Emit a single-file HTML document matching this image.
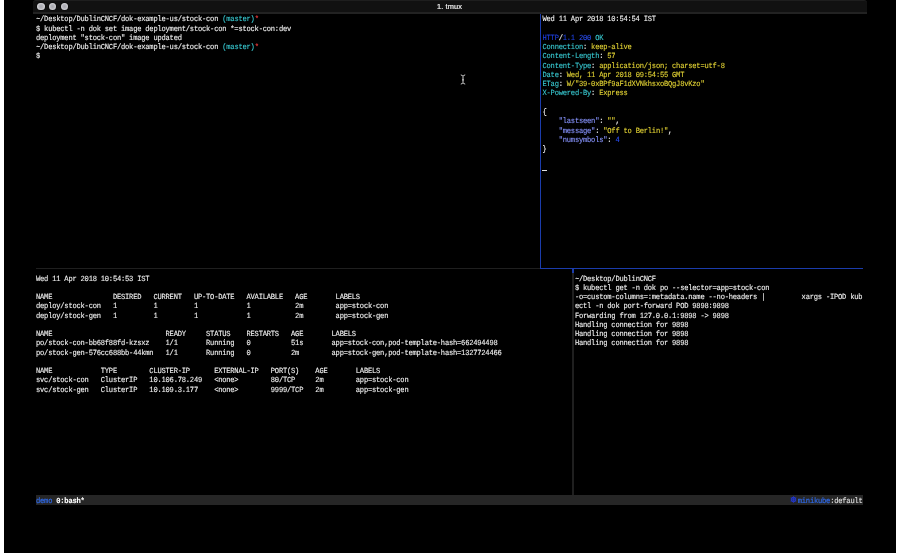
<!DOCTYPE html>
<html><head><meta charset="utf-8">
<style>
html,body{margin:0;padding:0;width:900px;height:555px;overflow:hidden;background:#fff}
#scr{position:absolute;left:4px;top:0;width:892px;height:553px;background:#000}
#tb{position:absolute;left:33px;top:0;width:834px;height:11px;background:#111;border-top:1px solid #1e1e1e;border-bottom:2px solid #222;box-sizing:content-box;border-radius:3px 3px 0 0;will-change:transform}
.dot{position:absolute;top:1.7px;width:7.4px;height:7.4px;border-radius:50%;background:radial-gradient(circle,#a9a9b0 0,#b4b4ba 35%,#d6d6da 72%,#c6c6ca 100%);box-shadow:0 0 0 0.6px #080808}
#title{position:absolute;left:0;width:833px;top:0.5px;text-align:center;font-family:"Liberation Sans",sans-serif;font-size:7.4px;color:#f0f0f0;line-height:9px;-webkit-text-stroke:0.2px #f0f0f0;letter-spacing:0.1px}
.t{position:absolute;font-family:"Liberation Mono",monospace;font-size:7.1000px;letter-spacing:-0.2086px;line-height:9.256px;white-space:pre;color:#f2f2f2;text-rendering:geometricPrecision;-webkit-text-stroke:0.1px currentColor;transform:scaleY(1.1);transform-origin:0 6.5px}
.ln{position:absolute}
#g{position:absolute;left:0;top:0;width:900px;height:555px;will-change:transform}
.cy{color:#38cad2}
.rd{color:#f03c3c}
.bl{color:#1f40e0}
.bl2{color:#2a4ef4}
.ye{color:#e4d434}
.kb{color:#8894ff}
.sb{color:#2f6cf0;-webkit-text-stroke:0.15px currentColor}
.wb{color:#ffffff;font-weight:bold}
.wt{color:#e0e0e0}
</style></head><body>
<div id="scr"></div>
<div id="tb">
<div class="dot" style="left:4.3px"></div>
<div class="dot" style="left:16px"></div>
<div class="dot" style="left:27.6px"></div>
<div id="title">1. tmux</div>
</div>
<div id="g"><div class="ln" style="left:539.824px;top:14.150px;width:1.30px;height:254.529px;background:#1b3cac"></div>
<div class="ln" style="left:36.000px;top:267.929px;width:504.474px;height:1.50px;background:#1f1f1f"></div>
<div class="ln" style="left:540.474px;top:267.929px;width:322.134px;height:1.50px;background:#1b3cac"></div>
<div class="ln" style="left:572.240px;top:268.679px;width:1.30px;height:4.628px;background:#1b3cac"></div>
<div class="ln" style="left:572.240px;top:273.307px;width:1.30px;height:222.134px;background:#1f1f1f"></div>
<div class="ln" style="left:542.1px;top:169.8px;width:4.7px;height:1.5px;background:#e0e0e0"></div>
<div class="t" style="left:36.000px;top:16.450px">~/Desktop/DublinCNCF/dok-example-us/stock-con <span class="cy">(master)</span><span class="rd">*</span></div>
<div class="t" style="left:36.000px;top:25.706px">$ kubectl -n dok set image deployment/stock-con *=stock-con:dev</div>
<div class="t" style="left:36.000px;top:34.961px">deployment "stock-con" image updated</div>
<div class="t" style="left:36.000px;top:44.217px">~/Desktop/DublinCNCF/dok-example-us/stock-con <span class="cy">(master)</span><span class="rd">*</span></div>
<div class="t" style="left:36.000px;top:53.472px">$</div>
<div class="t" style="left:542.500px;top:16.450px">Wed 11 Apr 2018 10:54:54 IST</div>
<div class="t" style="left:542.500px;top:34.961px"><span class="bl">HTTP</span>/<span class="bl">1.1</span> <span class="bl2">200</span> <span class="cy">OK</span></div>
<div class="t" style="left:542.500px;top:44.217px"><span class="cy">Connection</span>: <span class="ye">keep-alive</span></div>
<div class="t" style="left:542.500px;top:53.472px"><span class="cy">Content-Length</span>: <span class="ye">57</span></div>
<div class="t" style="left:542.500px;top:62.728px"><span class="cy">Content-Type</span>: <span class="ye">application/json; charset=utf-8</span></div>
<div class="t" style="left:542.500px;top:71.984px"><span class="cy">Date</span>: <span class="ye">Wed, 11 Apr 2018 09:54:55 GMT</span></div>
<div class="t" style="left:542.500px;top:81.239px"><span class="cy">ETag</span>: <span class="ye">W/"39-0xBPf9aF1dXVNkhsxoBQgJ8vKzo"</span></div>
<div class="t" style="left:542.500px;top:90.495px"><span class="cy">X-Powered-By</span>: <span class="ye">Express</span></div>
<div class="t" style="left:542.500px;top:109.006px">{</div>
<div class="t" style="left:542.500px;top:118.262px">    <span class="kb">"lastseen"</span>: <span class="ye">""</span>,</div>
<div class="t" style="left:542.500px;top:127.517px">    <span class="kb">"message"</span>: <span class="ye">"Off to Berlin!"</span>,</div>
<div class="t" style="left:542.500px;top:136.773px">    <span class="kb">"numsymbols"</span>: <span class="bl2">4</span></div>
<div class="t" style="left:542.500px;top:146.028px">}</div>
<div class="t" style="left:36.000px;top:275.607px">Wed 11 Apr 2018 10:54:53 IST</div>
<div class="t" style="left:36.000px;top:294.118px">NAME               DESIRED   CURRENT   UP-TO-DATE   AVAILABLE   AGE       LABELS</div>
<div class="t" style="left:36.000px;top:303.374px">deploy/stock-con   1         1         1            1           2m        app=stock-con</div>
<div class="t" style="left:36.000px;top:312.629px">deploy/stock-gen   1         1         1            1           2m        app=stock-gen</div>
<div class="t" style="left:36.000px;top:331.140px">NAME                            READY     STATUS    RESTARTS   AGE       LABELS</div>
<div class="t" style="left:36.000px;top:340.396px">po/stock-con-bb68f88fd-kzsxz    1/1       Running   0          51s       app=stock-con,pod-template-hash=662494498</div>
<div class="t" style="left:36.000px;top:349.652px">po/stock-gen-576cc688bb-44kmn   1/1       Running   0          2m        app=stock-gen,pod-template-hash=1327724466</div>
<div class="t" style="left:36.000px;top:368.163px">NAME            TYPE        CLUSTER-IP      EXTERNAL-IP   PORT(S)    AGE       LABELS</div>
<div class="t" style="left:36.000px;top:377.418px">svc/stock-con   ClusterIP   10.106.78.249   &lt;none&gt;        80/TCP     2m        app=stock-con</div>
<div class="t" style="left:36.000px;top:386.674px">svc/stock-gen   ClusterIP   10.109.3.177    &lt;none&gt;        9999/TCP   2m        app=stock-gen</div>
<div class="t" style="left:574.916px;top:275.607px">~/Desktop/DublinCNCF</div>
<div class="t" style="left:574.916px;top:284.862px">$ kubectl get -n dok po --selector=app=stock-con</div>
<div class="t" style="left:574.916px;top:294.118px">-o=custom-columns=:metadata.name --no-headers |         xargs -IPOD kub</div>
<div class="t" style="left:574.916px;top:303.374px">ectl -n dok port-forward POD 9898:9898</div>
<div class="t" style="left:574.916px;top:312.629px">Forwarding from 127.0.0.1:9898 -&gt; 9898</div>
<div class="t" style="left:574.916px;top:321.885px">Handling connection for 9898</div>
<div class="t" style="left:574.916px;top:331.140px">Handling connection for 9898</div>
<div class="t" style="left:574.916px;top:340.396px">Handling connection for 9898</div>
<div class="ln" style="left:36.000px;top:495.441px;width:826.608px;height:9.256px;background:#262626"></div>
<div class="t" style="left:36.000px;top:497.741px"><span class="sb">demo</span> <b class="wb">0:bash*</b></div>
<div class="t" style="left:797.776px;top:497.741px"><span class="sb">minikube</span><span class="wt">:default</span></div>
<svg style="position:absolute;left:789.6px;top:496.2px" width="7" height="7" viewBox="0 0 7 7"><circle cx="3.5" cy="3.5" r="2.2" fill="none" stroke="#2236c4" stroke-width="1.1"/><path d="M3.5,0.3 V6.7 M0.7,1.9 L6.3,5.1 M0.7,5.1 L6.3,1.9" stroke="#2236c4" stroke-width="0.9"/><circle cx="3.5" cy="3.5" r="0.9" fill="#2236c4"/></svg>
</div>
<svg style="position:absolute;left:460px;top:73.5px" width="6" height="11" viewBox="0 0 6 11"><path d="M0.8,0.9 Q2.4,1.3 3,2.2 Q3.6,1.3 5.2,0.9 M3,2.2 L3,8.8 M2,5.9 L4,5.9 M0.8,10.1 Q2.4,9.7 3,8.8 Q3.6,9.7 5.2,10.1" stroke="#cfcfcf" stroke-width="1" fill="none"/></svg>
</body></html>
